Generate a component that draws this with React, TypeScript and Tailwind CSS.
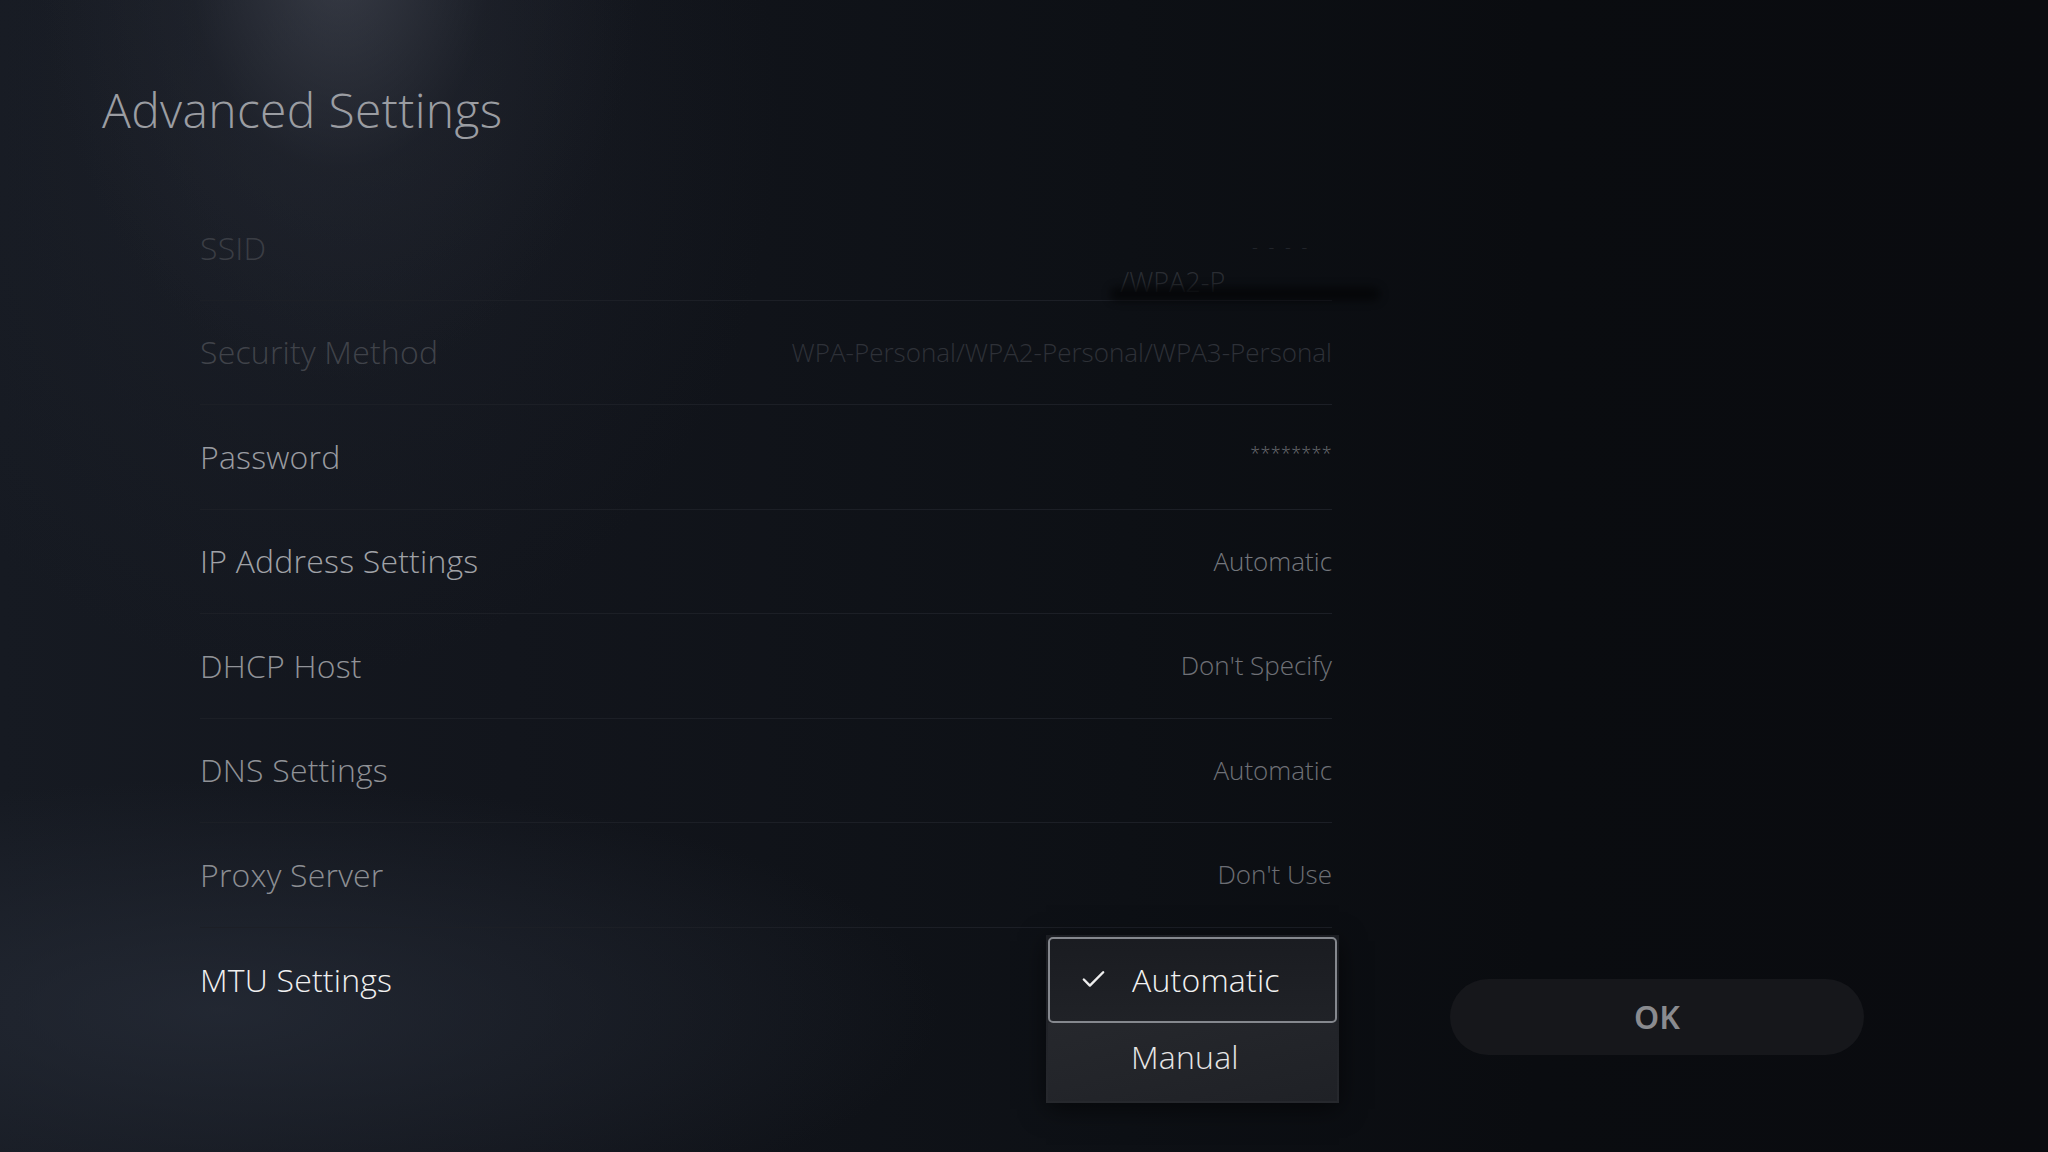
import { Check } from 'lucide-react';

type Row = {
  label: string;
  value?: string;
  labelClass: string;
  valueClass?: string;
};

const rows: Row[] = [
  { label: 'SSID', labelClass: 'text-[#3a3d44]' },
  {
    label: 'Security Method',
    value: 'WPA-Personal/WPA2-Personal/WPA3-Personal',
    labelClass: 'text-[#40434a]',
    valueClass: 'text-[#2e3138] text-[26px]',
  },
  { label: 'Password', value: '********', labelClass: 'text-[#9a9ca1]', valueClass: 'text-[#6c6e74] text-[18px] mb-[6px] tracking-[0.3px]' },
  { label: 'IP Address Settings', value: 'Automatic', labelClass: 'text-[#a0a2a7]', valueClass: 'text-[#74777d] text-[26px]' },
  { label: 'DHCP Host', value: "Don't Specify", labelClass: 'text-[#919398]', valueClass: 'text-[#6f7177] text-[26px]' },
  { label: 'DNS Settings', value: 'Automatic', labelClass: 'text-[#8f9196]', valueClass: 'text-[#6f7177] text-[26px]' },
  { label: 'Proxy Server', value: "Don't Use", labelClass: 'text-[#8c8e93]', valueClass: 'text-[#6c6e74] text-[26px]' },
];

const MtuDropdown = () => (
  <div className="absolute right-[-7px] top-[7px] w-[293px] h-[168px] bg-gradient-to-b from-[#1b1d22] to-[#26282d] shadow-[0_6px_24px_rgba(0,0,0,0.55)] flex flex-col p-[2px]">
    <div className="h-[86px] rounded-[5px] border-2 border-[#85888e] bg-gradient-to-b from-[#1a1c21] to-[#202227] flex items-center pl-[29px] gap-[24px]">
      <Check size={29} strokeWidth={2} className="text-[#eeeeee]" />
      <span className="text-[32px] text-[#f2f2f2] font-light tracking-[0.2px]">Automatic</span>
    </div>
    <div className="flex-1 flex items-center pl-[83px] pb-[9px] bg-gradient-to-br from-[#26282d] to-[#1f2126]">
      <span className="text-[32px] text-[#e6e6e6] font-light tracking-[0.2px]">Manual</span>
    </div>
  </div>
);

export default function App() {
  return (
    <div
      className="relative w-[2048px] h-[1152px] overflow-hidden bg-[#0a0c10] font-['Open_Sans','Noto_Sans',sans-serif] bg-[radial-gradient(ellipse_300px_420px_at_340px_-40px,rgba(80,84,96,0.55),rgba(42,46,56,0.28)_50%,transparent_100%),radial-gradient(ellipse_480px_560px_at_300px_120px,rgba(34,38,48,0.45),transparent_100%),radial-gradient(ellipse_720px_230px_at_220px_1010px,rgba(40,46,58,0.7),transparent_100%),linear-gradient(90deg,#161a22_0%,#12151c_25%,#0d1015_55%,#0a0c10_75%,#0a0b0f_100%)]"
    >
      {/* title */}
      <h1 className="pl-[102px] pt-[86px] text-[48px] leading-none font-light text-[#9b9da2] tracking-[0.35px]">
        Advanced Settings
      </h1>

      <div className="flex items-start mt-[62px]">
        {/* settings list */}
        <div className="ml-[200px] w-[1132px] flex flex-col">
          {rows.map((r) => (
            <div
              key={r.label}
              className="relative h-[104.5px] border-b border-[#1c1f26] flex items-center justify-between"
            >
              <span className={`text-[32px] font-light tracking-[0.2px] ${r.labelClass}`}>{r.label}</span>
              {r.value && <span className={`font-light ${r.valueClass ?? ''}`}>{r.value}</span>}
            </div>
          ))}
          <div className="relative h-[104.5px] flex items-center">
            <span className="text-[32px] font-light text-[#f0f0f0] tracking-[0.2px]">MTU Settings</span>
            <MtuDropdown />
          </div>
        </div>

        {/* ok button */}
        <div className="ml-[118px] mt-[783px]">
          <button className="w-[414px] h-[76px] rounded-full bg-[#16171b] flex items-center justify-center text-[32px] font-semibold text-[#8a8b8f] font-['Noto_Sans','Open_Sans',sans-serif]">
            OK
          </button>
        </div>
      </div>

      {/* ghost of scrolled ssid value */}
      <span className="absolute left-[1120px] top-[268px] text-[27px] font-light text-[#2a2d33] leading-none">/WPA2-P</span>
      <span className="absolute left-[1252px] top-[238px] text-[18px] font-light text-[#24272d] leading-none tracking-[3px]">- - - -</span>
      <div className="absolute left-[1110px] top-[287px] w-[270px] h-[14px] rounded-full bg-[#050608] blur-[4px] opacity-90" />
    </div>
  );
}
